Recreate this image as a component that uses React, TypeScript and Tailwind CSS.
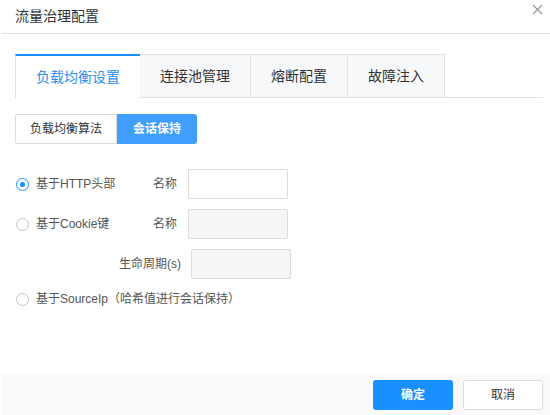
import React from "react";

const font = { fontFamily: '"Liberation Sans", "Noto Sans CJK SC", sans-serif' };

function Radio({ checked, label }: { checked?: boolean; label: string }) {
  return (
    <label className="flex items-center gap-[7px] text-[12px] text-[#555]">
      <span
        className={
          "flex h-[13px] w-[13px] items-center justify-center rounded-full border bg-white " +
          (checked ? "border-[#1890ff]" : "border-[#c4c4c4]")
        }
      >
        {checked && <span className="h-[5px] w-[5px] rounded-full bg-[#1890ff]" />}
      </span>
      {label}
    </label>
  );
}

export default function App() {
  const tabs = ["负载均衡设置", "连接池管理", "熔断配置", "故障注入"];
  const tabWidths = ["w-[125px]", "w-[111px]", "w-[97px]", "w-[97px]"];
  return (
    <div className="flex h-[415px] w-[550px] flex-col bg-white" style={font}>
      <div className="ml-[2px] flex h-[34px] items-center justify-between border-b border-[#e4e4e4] pl-[13px] pr-[7px]">
        <span className="text-[14px] text-[#333]">流量治理配置</span>
        <svg width="11" height="11" viewBox="0 0 11 11" className="-mt-[14px]">
          <path d="M1 1L10 10M10 1L1 10" stroke="#999" strokeWidth="1.3" />
        </svg>
      </div>

      <div className="flex flex-1 flex-col px-[15px] pt-[20px]">
        <div className="mr-[-8px] flex h-[44px] border-b border-[#e2e2e2]">
          {tabs.map((t, i) => (
            <div
              key={t}
              className={
                "flex items-center justify-center text-[14px] " +
                tabWidths[i] +
                (i === 0
                  ? " -mb-px border-l border-t-2 border-[#e2e2e2] border-t-[#1890ff] bg-white text-[#2b8ff0]"
                  : " border-r border-t border-[#e2e2e2] bg-[#f7f8fa] text-[#333]")
              }
            >
              {t}
            </div>
          ))}
        </div>

        <div className="mt-[16px] flex h-[30px] text-[12px]">
          <div className="flex w-[102px] items-center justify-center rounded-l-[2px] border border-[#dcdcdc] bg-white text-[#333]">
            负载均衡算法
          </div>
          <div className="flex w-[80px] items-center justify-center rounded-r-[3px] bg-[#409eff] font-bold text-white">
            会话保持
          </div>
        </div>

        <div className="mt-[25px] flex flex-col gap-[10px] pl-px text-[12px] text-[#555]">
          <div className="flex h-[30px] items-center">
            <div className="flex w-[161px] items-center justify-between">
              <Radio checked label="基于HTTP头部" />
              <span>名称</span>
            </div>
            <div className="ml-[11px] h-[30px] w-[100px] rounded-[2px] border border-[#dcdcdc] bg-white" />
          </div>
          <div className="flex h-[30px] items-center">
            <div className="flex w-[161px] items-center justify-between">
              <Radio label="基于Cookie键" />
              <span>名称</span>
            </div>
            <div className="ml-[11px] h-[30px] w-[100px] rounded-[2px] border border-[#dcdcdc] bg-[#f5f6f8]" />
          </div>
          <div className="flex h-[30px] items-center">
            <div className="flex w-[165px] justify-end">
              <span>生命周期(s)</span>
            </div>
            <div className="ml-[10px] h-[30px] w-[100px] rounded-[2px] border border-[#dcdcdc] bg-[#f5f6f8]" />
          </div>
          <div className="flex h-[20px] items-center">
            <Radio label="基于SourceIp（哈希值进行会话保持）" />
          </div>
        </div>
      </div>

      <div className="ml-[2px] flex h-[41px] items-center justify-end gap-[10px] bg-[#f9f9f9] pr-[7px]">
        <button className="h-[30px] w-[80px] rounded-[3px] bg-[#1890ff] text-[12px] font-bold text-white">
          确定
        </button>
        <button className="h-[30px] w-[80px] rounded-[3px] border border-[#dcdcdc] bg-white text-[12px] text-[#333]">
          取消
        </button>
      </div>
    </div>
  );
}
